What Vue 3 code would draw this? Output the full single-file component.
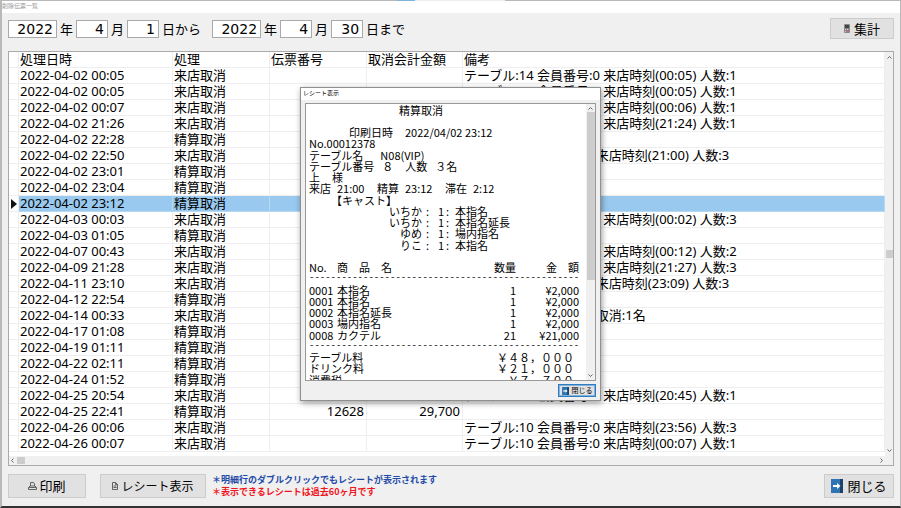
<script setup>
import { ref } from 'vue'

const period = ref({ y1: '2022', m1: '4', d1: '1', y2: '2022', m2: '4', d2: '30' })

const visit = '来店取消'
const settle = '精算取消'
const note = (table, time, people) => `テーブル:${table} 会員番号:0 来店時刻(${time}) 人数:${people}`

const rows = [
  { at: '2022-04-02 00:05', kind: visit, note: note('14', '00:05', 1) },
  { at: '2022-04-02 00:05', kind: visit, note: note('14', '00:05', 1) },
  { at: '2022-04-02 00:07', kind: visit, note: note('14', '00:06', 1) },
  { at: '2022-04-02 21:26', kind: visit, note: note('10', '21:24', 1) },
  { at: '2022-04-02 22:28', kind: settle },
  { at: '2022-04-02 22:50', kind: visit, note: note('8', '21:00', 3) },
  { at: '2022-04-02 23:01', kind: settle },
  { at: '2022-04-02 23:04', kind: settle },
  { at: '2022-04-02 23:12', kind: settle, selected: true },
  { at: '2022-04-03 00:03', kind: visit, note: note('10', '00:02', 3) },
  { at: '2022-04-03 01:05', kind: settle },
  { at: '2022-04-07 00:43', kind: visit, note: note('10', '00:12', 2) },
  { at: '2022-04-09 21:28', kind: visit, note: note('10', '21:27', 3) },
  { at: '2022-04-11 23:10', kind: visit, note: note('8', '23:09', 3) },
  { at: '2022-04-12 22:54', kind: settle },
  { at: '2022-04-14 00:33', kind: visit, note: 'テーブル:8 会員番号:0 取消:1名' },
  { at: '2022-04-17 01:08', kind: settle },
  { at: '2022-04-19 01:11', kind: settle },
  { at: '2022-04-22 02:11', kind: settle },
  { at: '2022-04-24 01:52', kind: settle },
  { at: '2022-04-25 20:54', kind: visit, note: note('10', '20:45', 1) },
  { at: '2022-04-25 22:41', kind: settle, slip: '12628', amount: '29,700' },
  { at: '2022-04-26 00:06', kind: visit, note: note('10', '23:56', 3) },
  { at: '2022-04-26 00:07', kind: visit, note: note('10', '00:07', 1) },
]

const casts = [
  { name: 'いちか', item: '本指名' },
  { name: 'いちか', item: '本指名延長' },
  { name: 'ゆめ', item: '場内指名' },
  { name: 'りこ', item: '本指名' },
]

const items = [
  { no: '0001', name: '本指名', qty: '1', price: '¥2,000' },
  { no: '0001', name: '本指名', qty: '1', price: '¥2,000' },
  { no: '0002', name: '本指名延長', qty: '1', price: '¥2,000' },
  { no: '0003', name: '場内指名', qty: '1', price: '¥2,000' },
  { no: '0008', name: 'カクテル', qty: '21', price: '¥21,000' },
]

const totals = [
  { label: 'テーブル料', value: '￥４８，０００' },
  { label: 'ドリンク料', value: '￥２１，０００' },
  { label: '消費税', value: '￥７，７００' },
]

const rule = '-'.repeat(50)
</script>

<template>
  <div class="window">
    <header class="titlebar">削除伝票一覧</header>

    <form class="filter" @submit.prevent>
      <input id="y1" v-model="period.y1" class="num year"><label for="y1" class="unit">年</label>
      <input id="m1" v-model="period.m1" class="num"><label for="m1" class="unit">月</label>
      <input id="d1" v-model="period.d1" class="num"><label for="d1" class="unit from">日から</label>
      <input id="y2" v-model="period.y2" class="num year"><label for="y2" class="unit">年</label>
      <input id="m2" v-model="period.m2" class="num"><label for="m2" class="unit">月</label>
      <input id="d2" v-model="period.d2" class="num"><label for="d2" class="unit">日まで</label>
      <button type="button" class="btn sum">
        <svg width="6" height="9" viewBox="0 0 6 9" aria-hidden="true">
          <rect width="6" height="9" rx="1" fill="#888" />
          <rect x="1" y="1" width="4" height="3" fill="#444" />
          <path d="M1 5.500h1M3 5.500h1M1 7.500h1" stroke="#ccc" />
          <rect x="3" y="6" width="2" height="2" fill="#c66" />
        </svg>
        集計
      </button>
    </form>

    <main class="grid">
      <div class="rows">
        <table>
          <colgroup>
            <col class="c-mark"><col class="c-at"><col class="c-kind"><col class="c-slip"><col class="c-amount"><col>
          </colgroup>
          <thead>
            <tr><th></th><th>処理日時</th><th>処理</th><th>伝票番号</th><th>取消会計金額</th><th>備考</th></tr>
          </thead>
          <tbody>
            <tr v-for="(r, i) in rows" :key="i" :class="{ selected: r.selected }">
              <td class="mark">
                <svg v-if="r.selected" width="6" height="10" viewBox="0 0 6 10" aria-hidden="true"><path d="M0 0l6 5-6 5z" fill="#111" /></svg>
              </td>
              <td>{{ r.at }}</td>
              <td>{{ r.kind }}</td>
              <td class="right">{{ r.slip }}</td>
              <td class="right">{{ r.amount }}</td>
              <td>{{ r.note }}</td>
            </tr>
          </tbody>
        </table>
      </div>
      <div class="vscroll">
        <svg width="5" height="3" viewBox="0 0 5 3" aria-hidden="true"><path d="M.5 2.500l2-2 2 2" fill="none" stroke="#666" /></svg>
        <i class="thumb"></i>
        <svg width="5" height="3" viewBox="0 0 5 3" aria-hidden="true"><path d="M.5.5l2 2 2-2" fill="none" stroke="#666" /></svg>
      </div>
      <div class="hscroll">
        <svg width="3" height="5" viewBox="0 0 3 5" aria-hidden="true"><path d="M2.500.5l-2 2 2 2" fill="none" stroke="#666" /></svg>
        <i class="thumb"></i>
        <svg class="end" width="3" height="5" viewBox="0 0 3 5" aria-hidden="true"><path d="M.5.5l2 2-2 2" fill="none" stroke="#666" /></svg>
      </div>
    </main>

    <footer class="actions">
      <button type="button" class="btn print">
        <svg width="9" height="8" viewBox="0 0 9 8" aria-hidden="true">
          <path d="M2.500 4V.5h3L6.500 2v2M.5 7.500v-2l1.500-1.500h5l1.500 1.500v2zM1 5.500h7" fill="none" stroke="#444" stroke-width=".8" />
        </svg>
        印刷
      </button>
      <button type="button" class="btn receipt-btn">
        <svg width="6" height="8" viewBox="0 0 6 8" aria-hidden="true">
          <path d="M.5.5h3l2 2v5h-5zM3.500.5v2h2M1.500 4h3M1.500 5.500h3" fill="none" stroke="#444" stroke-width=".8" />
        </svg>
        レシート表示
      </button>
      <div class="hints">
        <p class="blue">＊明細行のダブルクリックでもレシートが表示されます</p>
        <p class="red">＊表示できるレシートは過去60ヶ月です</p>
      </div>
      <button type="button" class="btn close">
        <svg width="12" height="14" viewBox="0 0 12 14" aria-hidden="true">
          <rect width="12" height="14" fill="#2e75b6" />
          <rect x="9" width="3" height="14" fill="#1f4068" />
          <path d="M2 7h5" stroke="#fff" stroke-width="2" />
          <path d="M6 4l3.500 3L6 10z" fill="#fff" />
        </svg>
        閉じる
      </button>
    </footer>

    <section class="dialog" role="dialog" aria-label="レシート表示">
      <header class="dialog-title">レシート表示</header>
      <div class="paper">
        <div class="sheet">
          <div class="line center">精算取消</div>
          <div class="line"></div>
          <div class="line printed"><span>印刷日時</span><span>2022/04/02 23:12</span></div>
          <div class="line">No.00012378</div>
          <div class="line gap-l"><span>テーブル名</span><span>N08(VIP)</span></div>
          <div class="line gap-s"><span>テーブル番号</span><span>８</span><span class="people">人数</span><span>３名</span></div>
          <div class="line gap-m"><span>上</span><span>様</span></div>
          <div class="line times"><span>来店</span><span>21:00</span><span>精算</span><span>23:12</span><span>滞在</span><span>2:12</span></div>
          <div class="line cast-head">【キャスト】</div>
          <div v-for="(c, i) in casts" :key="'c' + i" class="line cast">
            <span class="who">{{ c.name }}</span><span>:</span><span>1</span><span>:</span><span>{{ c.item }}</span>
          </div>
          <div class="line"></div>
          <div class="line item"><span>No.</span><span>商　品　名</span><span>数量</span><span>金　額</span></div>
          <div class="line rule">{{ rule }}</div>
          <div v-for="(t, i) in items" :key="'i' + i" class="line item">
            <span>{{ t.no }}</span><span>{{ t.name }}</span><span>{{ t.qty }}</span><span>{{ t.price }}</span>
          </div>
          <div class="line rule">{{ rule }}</div>
          <div v-for="(t, i) in totals" :key="'t' + i" class="line total"><span>{{ t.label }}</span><span>{{ t.value }}</span></div>
        </div>
        <div class="vscroll small">
          <svg width="5" height="3" viewBox="0 0 5 3" aria-hidden="true"><path d="M.5 2.500l2-2 2 2" fill="none" stroke="#666" /></svg>
          <i class="thumb"></i>
          <svg width="5" height="3" viewBox="0 0 5 3" aria-hidden="true"><path d="M.5.5l2 2 2-2" fill="none" stroke="#666" /></svg>
        </div>
      </div>
      <button type="button" class="mini-close">
        <svg width="7" height="8" viewBox="0 0 12 14" aria-hidden="true">
          <rect width="12" height="14" fill="#2e75b6" />
          <rect x="9" width="3" height="14" fill="#1f4068" />
          <path d="M2 7h5" stroke="#fff" stroke-width="2" />
          <path d="M6 4l3.500 3L6 10z" fill="#fff" />
        </svg>
        閉じる
      </button>
    </section>
  </div>
</template>

<style>
body { background: #c4c4c4; }
</style>

<style scoped>
* { box-sizing: border-box; }
.window {
  position: relative;
  display: flex;
  flex-direction: column;
  height: 100vh;
  border: 1px solid #b9b9b9;
  border-top: 0;
  border-left-width: 2px;
  border-bottom: 2px solid #333;
  background: #f0f0f0;
  color: #000;
  font: 13px/16px "Noto Sans", "Noto Sans CJK JP", sans-serif;
}
.titlebar {
  flex: none;
  height: 13px;
  background: linear-gradient(90deg, #b9b9b9 44%, #7fb4dc 44% 46%, #eee 46% 56%, #b9b9b9 56%) top / 100% 1px no-repeat #fff;
  color: #999;
  font-size: 6px;
  line-height: 13px;
}
.filter {
  flex: none;
  display: flex;
  align-items: center;
  height: 31px;
  padding: 0 6px;
}
.num {
  width: 32px;
  height: 18px;
  padding: 0 3px;
  border: 1px solid #a9a9a9;
  background: #fff;
  color: #000;
  font: 14px/16px "DejaVu Sans", sans-serif;
  text-align: right;
}
.year { width: 49px; }
.unit { padding: 0 3px; }
.from { padding-right: 11px; }
.btn {
  display: flex;
  align-items: center;
  justify-content: center;
  gap: 2px;
  padding: 0;
  border: 1px solid #ccc;
  background: #e1e1e1;
  color: #000;
  font: 13px/16px "Noto Sans CJK JP", sans-serif;
}
.sum { width: 64px; height: 21px; margin-left: auto; gap: 4px; }
.grid {
  flex: 1;
  min-height: 0;
  display: grid;
  grid-template: minmax(0, 1fr) 9px / minmax(0, 1fr) 8px;
  margin: 7px 6px 0;
  border: 1px solid #aaa;
  background: #fff;
}
.rows { overflow: hidden; }
table { width: 100%; table-layout: fixed; border-collapse: separate; border-spacing: 0; }
.c-mark { width: 10px; }
.c-at { width: 154px; }
.c-kind { width: 97px; }
.c-slip { width: 97px; }
.c-amount { width: 96px; }
th, td {
  height: 16px;
  padding: 0 2px 0 1px;
  border-right: 1px solid #eee;
  border-bottom: 1px solid #eee;
  font-weight: 400;
  line-height: 15px;
  text-align: left;
  white-space: nowrap;
}
.right { text-align: right; }
.mark { padding-left: 2px; line-height: 0; }
.selected td:not(.mark) { background: #99c9ef; border-color: #b5d8f3; }
.vscroll {
  display: flex;
  flex-direction: column;
  align-items: center;
  justify-content: space-between;
  padding: 4px 0;
  background: #f0f0f0;
}
.vscroll .thumb { width: 7px; height: 8px; background: #cdcdcd; }
.hscroll {
  grid-column: 1 / -1;
  display: flex;
  align-items: center;
  gap: 3px;
  padding: 0 10px 0 2px;
  background: #f0f0f0;
}
.hscroll .thumb { width: 8px; height: 7px; background: #cdcdcd; }
.end { margin-left: auto; }
.actions {
  flex: none;
  display: flex;
  align-items: center;
  height: 40px;
  padding: 0 6px;
}
.actions .btn { height: 24px; }
.print { width: 78px; }
.actions .receipt-btn { width: 106px; margin-left: 14px; gap: 3px; font-size: 12px; }
.hints { margin-left: 6px; font: 700 9px/12px "Noto Sans CJK JP", sans-serif; }
.hints p { margin: 0; }
.blue { color: #1f4aa8; }
.red { color: #f0141e; }
.close { width: 70px; margin-left: auto; }
.actions .close { gap: 4px; }

.dialog {
  position: absolute;
  left: 298px;
  top: 87px;
  width: 301px;
  height: 314px;
  display: flex;
  flex-direction: column;
  border: 1px solid #8f8f8f;
  background: #f0f0f0;
  box-shadow: 1px 2px 6px rgba(0, 0, 0, .4);
}
.dialog-title { flex: none; height: 12px; padding-left: 2px; background: #fff; font-size: 6px; line-height: 11px; }
.paper {
  flex: 1;
  min-height: 0;
  display: flex;
  margin: 3px 4px 0;
  border: 1px solid #999;
  background: #fff;
}
.sheet {
  flex: 1;
  min-width: 0;
  overflow: hidden;
  padding: 1px 7px 0 3px;
  font: 11px/11px "Noto Sans CJK JP", sans-serif;
}
.line { display: flex; flex: none; height: 11px; white-space: pre; }
.line:nth-child(4n) { height: 12px; }
.center { padding-left: 90px; }
.printed { gap: 12px; padding-left: 40px; }
.gap-l { gap: 17px; }
.gap-m { gap: 12px; }
.gap-s { gap: 8px; }
.people { padding-left: 4px; }
.times { display: grid; grid-template-columns: 28px 40px 28px 40px 28px 1fr; }
.cast-head { padding-left: 22px; }
.cast { display: grid; grid-template-columns: 113px 16px 8px 9px 1fr; }
.who { text-align: right; }
.cast span:nth-child(2) { padding-left: 4px; }
.item { display: grid; grid-template-columns: 28px 1fr 60px 63px; }
.item span:nth-child(n + 3) { text-align: right; }
.rule { font-family: "Liberation Mono", monospace; font-size: 9px; }
.total { justify-content: space-between; padding-right: 5px; }
.small { width: 9px; padding: 3px 0; }
.small .thumb { width: 8px; height: 168px; margin-bottom: auto; margin-top: 2px; }
.mini-close {
  flex: none;
  align-self: flex-end;
  display: flex;
  align-items: center;
  justify-content: center;
  gap: 3px;
  width: 38px;
  height: 13px;
  margin: 3px 4px;
  padding: 0;
  border: 1px solid #2f7cc0;
  outline: 1px solid #7fb2dc;
  outline-offset: -2px;
  background: #e1e1e1;
  color: #000;
  font: 7px/9px "Noto Sans CJK JP", sans-serif;
}
</style>
